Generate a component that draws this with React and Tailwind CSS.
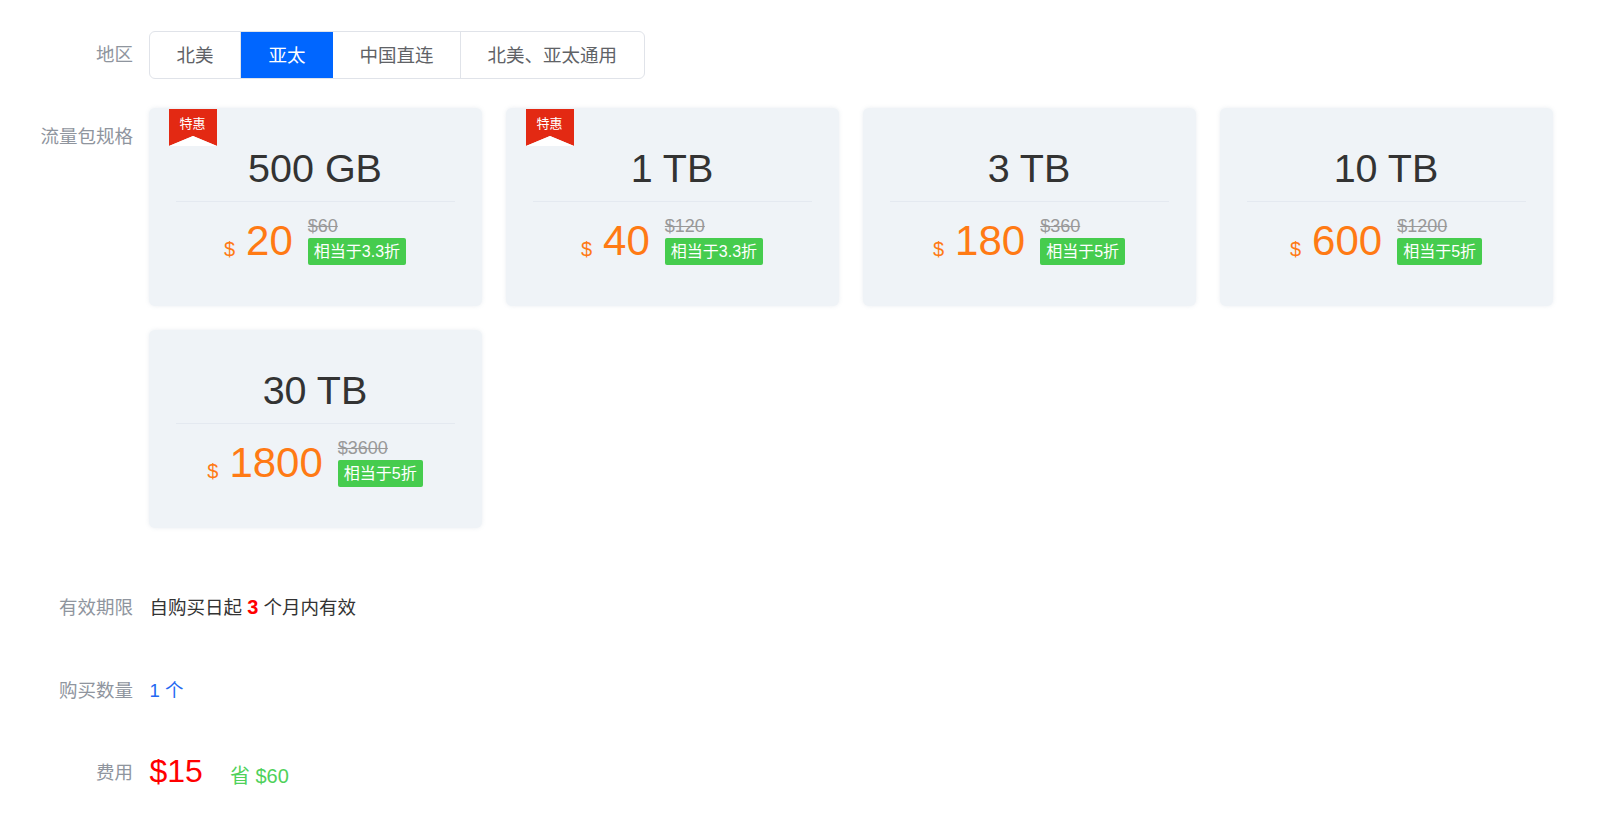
const font = "font-['Liberation_Sans','Noto_Sans_CJK_SC',sans-serif]";

const regions = ["北美", "亚太", "中国直连", "北美、亚太通用"];

const plans = [
  { size: "500 GB", price: "20", old: "$60", off: "相当于3.3折", hot: true },
  { size: "1 TB", price: "40", old: "$120", off: "相当于3.3折", hot: true },
  { size: "3 TB", price: "180", old: "$360", off: "相当于5折" },
  { size: "10 TB", price: "600", old: "$1200", off: "相当于5折" },
  { size: "30 TB", price: "1800", old: "$3600", off: "相当于5折" },
];

const Ribbon = () => (
  <div className="absolute left-[20px] top-[1px] h-[37px] w-[48px]">
    <svg width="48" height="37" viewBox="0 0 48 37" className="absolute inset-0">
      <path d="M0 0H48V37L24 27L0 37Z" fill="#e32913" />
      <path d="M0 37L24 27L48 37Z" fill="#ffffff" />
    </svg>
    <div className="relative pt-[7px] text-center text-[13px] leading-[16px] text-white">特惠</div>
  </div>
);

const PlanCard = ({ plan }) => (
  <div className="relative h-[198px] rounded-md bg-[#eff3f7] px-[27px] shadow-[0_0_4px_rgba(220,225,232,0.6)]">
    {plan.hot && <Ribbon />}
    <div className="h-[94px] border-b border-[#e4e9f0] pt-[34px] text-center text-[39.5px] leading-[52px] text-[#333333]">
      {plan.size}
    </div>
    <div className="flex items-start justify-center pt-[14px]">
      <span className="mt-[19px] mr-[11px] text-[20px] leading-[28px] text-[#ff7a14]">$</span>
      <span className="mr-[15px] text-[42px] leading-[50px] text-[#ff7a14]">{plan.price}</span>
      <div className="flex flex-col items-start">
        <span className="text-[18px] leading-[20px] text-[#999999] line-through">{plan.old}</span>
        <span className="mt-[2px] rounded-[2px] bg-[#46cc4e] px-[6px] text-[16px] leading-[27px] text-white">
          {plan.off}
        </span>
      </div>
    </div>
  </div>
);

const Label = ({ children, className = "" }) => (
  <div className={`w-[133px] shrink-0 text-right text-[18.5px] leading-[24px] text-[#8f959e] ${className}`}>
    {children}
  </div>
);

export default function App() {
  return (
    <div className={`${font} min-h-[822px] bg-white pt-[31px] pr-[47.5px]`}>
      <div className="flex items-center">
        <Label className="mt-[-1px]">地区</Label>
        <div className="ml-[16px] flex h-[48px] overflow-hidden rounded-[6px] border border-[#e0e3e9] text-[18.5px] text-[#606266]">
          {regions.map((r, i) => (
            <div
              key={r}
              className={
                i === 1
                  ? "-my-px flex w-[92px] items-center justify-center bg-[#0066ff] pt-[2px] text-white"
                  : "flex items-center justify-center border-r border-[#e0e3e9] px-[26.5px] pt-[2px] last:border-r-0"
              }
            >
              {r}
            </div>
          ))}
        </div>
      </div>

      <div className="mt-[29px] flex">
        <Label className="mt-[17px]">流量包规格</Label>
        <div className="ml-[15.5px] grid flex-1 grid-cols-4 gap-[24px]">
          {plans.map((p) => (
            <PlanCard key={p.size} plan={p} />
          ))}
        </div>
      </div>

      <div className="mt-[68px] flex items-center">
        <Label>有效期限</Label>
        <div className="ml-[16.5px] text-[18.5px] leading-[24px] text-[#333333]">
          自购买日起 <b className="text-[20px] leading-none text-[#ff0000]">3</b> 个月内有效
        </div>
      </div>

      <div className="mt-[59px] flex items-center">
        <Label>购买数量</Label>
        <div className="ml-[16.5px] text-[18.5px] leading-[24px] text-[#2468f2]">1 个</div>
      </div>

      <div className="mt-[52px] flex items-center">
        <Label>费用</Label>
        <div className="ml-[16.5px] flex items-center">
          <span className="-mt-[4px] text-[32px] leading-[40px] text-[#ff0000]">$15</span>
          <span className="ml-[27px] mt-[6px] text-[20px] leading-[28px] text-[#4fd15a]">省 $60</span>
        </div>
      </div>
    </div>
  );
}
